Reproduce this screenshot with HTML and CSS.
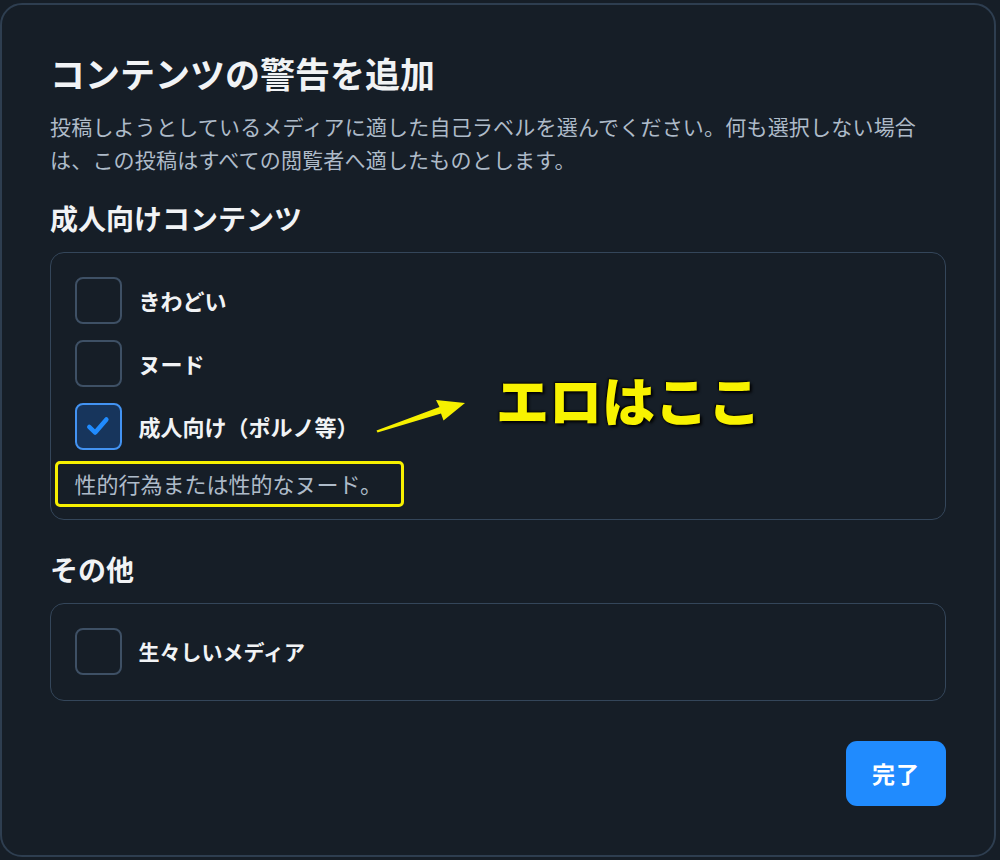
FILE: index.html
```html
<!DOCTYPE html>
<html lang="ja">
<head>
<meta charset="utf-8">
<link rel="stylesheet" href="styles.css">
</head>
<body>
<div class="dialog">
  <h1 class="title">コンテンツの警告を追加</h1>
  <p class="desc">投稿しようとしているメディアに適した自己ラベルを選んでください。何も選択しない場合は、この投稿はすべての閲覧者へ適したものとします。</p>

  <h2 class="section">成人向けコンテンツ</h2>
  <div class="group group-adult">
    <div class="row"><span class="box"></span><span class="label">きわどい</span></div>
    <div class="row"><span class="box"></span><span class="label">ヌード</span></div>
    <div class="row"><span class="box checked"><svg viewBox="0 0 24 24" width="28" height="28"><path d="M4.5 12.8 L9.6 17.6 L19.2 6.4" fill="none" stroke="#208bfe" stroke-width="3.8" stroke-linecap="round" stroke-linejoin="round"/></svg></span><span class="label">成人向け（ポルノ等）</span></div>
    <p class="hint">性的行為または性的なヌード。</p>
  </div>

  <h2 class="section second">その他</h2>
  <div class="group group-other">
    <div class="row"><span class="box"></span><span class="label narrow">生々しいメディア</span></div>
  </div>

  <div class="actions"><button class="done">完了</button></div>

  <div class="note-frame"></div>
  <svg class="note-arrow" viewBox="0 0 100 45" width="100" height="45"><polygon points="5.5,38.5 68.5,15 65,8 94,11 72.5,28.5 70,21.5 6.5,40.5" fill="#f6f000"/></svg>
  <div class="note-text">エロはここ</div>
</div>
</body>
</html>
```
FILE: styles.css
```css
html, body {
  margin: 0;
  padding: 0;
  background: #161e27;
}
body {
  width: 1000px;
  height: 860px;
  overflow: hidden;
  font-family: "Noto Sans CJK JP", "Noto Sans", sans-serif;
  color: #f1f3f5;
}
.dialog {
  position: relative;
  box-sizing: border-box;
  width: 996px;
  height: 854px;
  margin-top: 3px;
  border: 2px solid #2e3e50;
  border-radius: 22px;
  background: #161e27;
  padding: 45px 48px 0 48px;
}
.title {
  margin: 0;
  font-size: 35px;
  line-height: 46px;
  font-weight: 700;
}
.desc {
  margin: 14px 0 0;
  font-size: 21px;
  line-height: 33px;
  color: #aebbc9;
  font-weight: 400;
  letter-spacing: 0.2px;
}
.section {
  margin: 24px 0 0;
  font-size: 28px;
  line-height: 36px;
  font-weight: 700;
}
.section.second {
  margin-top: 31px;
}
.group {
  margin-top: 16px;
  border: 1.5px solid #34465a;
  border-radius: 14px;
  padding: 23.5px 23.5px;
  display: flex;
  flex-direction: column;
  gap: 16px;
}
.group-adult {
  padding-bottom: 21.5px;
}
.group-other {
  padding-bottom: 25px;
}
.row {
  display: flex;
  align-items: center;
  gap: 17px;
  height: 47px;
}
.box {
  box-sizing: border-box;
  width: 47px;
  height: 47px;
  border: 2px solid #3e5065;
  border-radius: 8px;
  display: flex;
  align-items: center;
  justify-content: center;
  flex: none;
}
.box.checked {
  background: #17355c;
  border-color: #4393f2;
}
.label {
  font-size: 22px;
  font-weight: 700;
  line-height: 30px;
}
.label.narrow {
  font-size: 21px;
}
.hint {
  margin: 2px 0 0;
  font-size: 22px;
  line-height: 30px;
  color: #aebbc9;
}
.actions {
  display: flex;
  justify-content: flex-end;
  margin-top: 40px;
}
.done {
  width: 100px;
  height: 65px;
  border: none;
  border-radius: 11px;
  background: #208bfe;
  color: #ffffff;
  font-family: "Noto Sans CJK JP", sans-serif;
  font-size: 23px;
  font-weight: 700;
  letter-spacing: 1px;
}
.note-frame {
  position: absolute;
  left: 53px;
  top: 456px;
  width: 343px;
  height: 40px;
  border: 3px solid #f6f000;
  border-radius: 5px;
}
.note-arrow {
  position: absolute;
  left: 369px;
  top: 387px;
}
.note-text {
  position: absolute;
  left: 494px;
  top: 364px;
  font-size: 53px;
  line-height: 60px;
  font-weight: 900;
  color: #f8f200;
  text-shadow: 2px 2px 3px #000000, -1px -1px 2px #000000;
}
```
